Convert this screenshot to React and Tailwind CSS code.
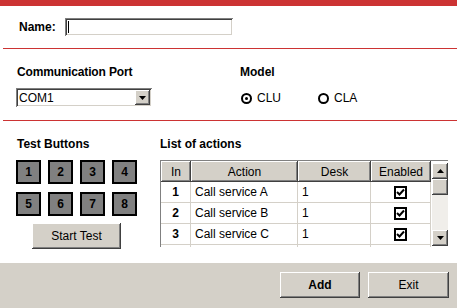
import React from "react";

const raised =
  "shadow-[inset_-1px_-1px_0_#404040,inset_1px_1px_0_#ffffff,inset_-2px_-2px_0_#808080,inset_2px_2px_0_#d4d0c8]";
const sunken =
  "shadow-[inset_1px_1px_0_#808080,inset_-1px_-1px_0_#ffffff,inset_2px_2px_0_#404040,inset_-2px_-2px_0_#d4d0c8]";

const Arrow = ({ up }) => (
  <svg width="7" height="4" viewBox="0 0 7 4">
    <path d={up ? "M3.5 0 L7 4 L0 4 Z" : "M0 0 L7 0 L3.5 4 Z"} fill="#000" />
  </svg>
);

const Radio = ({ checked, label }) => (
  <div className="flex items-center gap-[5px]">
    <div className="w-[11px] h-[11px] rounded-full border-2 border-black flex items-center justify-center">
      {checked && <div className="w-[3px] h-[3px] rounded-full bg-black" />}
    </div>
    <span className="text-[12px] text-black">{label}</span>
  </div>
);

const Check = () => (
  <div className="w-[13px] h-[13px] border-2 border-black bg-white flex items-center justify-center">
    <svg width="9" height="9" viewBox="0 0 9 9">
      <path d="M1 4 L3.5 6.5 L8 1.5" stroke="#000" strokeWidth="2" fill="none" />
    </svg>
  </div>
);

const rows = [
  { n: 1, action: "Call service A", desk: "1" },
  { n: 2, action: "Call service B", desk: "1" },
  { n: 3, action: "Call service C", desk: "1" },
];

const cell = "border-r border-b border-[#d4d0c8]";

export default function App() {
  return (
    <div className="w-[457px] h-[308px] bg-white overflow-hidden flex flex-col font-['Liberation_Sans',Arial,sans-serif] text-black">
      <div className="h-[6px] bg-[#cc3333]" />

      {/* Name */}
      <div className="flex items-center pt-[12px] pl-[19px] gap-[9px]">
        <span className="text-[12px] font-bold">Name:</span>
        <div className={`w-[168px] h-[18px] bg-white ${sunken} flex items-center pl-[3px]`}>
          <div className="w-px h-[12px] bg-black" />
        </div>
      </div>
      <div className="mt-[12px] ml-[3px] h-px bg-[#cc3333]" />

      {/* Port & model */}
      <div className="flex h-[71px] pt-[16px]">
        <div className="w-[240px] pl-[17px] flex flex-col">
          <span className="text-[12px] font-bold leading-[14px] tracking-[-0.15px]">Communication Port</span>
          <div className={`mt-[9px] ml-[-1px] w-[136px] h-[19px] bg-white ${sunken} flex items-center justify-between pl-[3px] pr-[2px]`}>
            <span className="text-[12px]">COM1</span>
            <div className={`w-[15px] h-[15px] bg-[#d4d0c8] ${raised} flex items-center justify-center`}>
              <Arrow />
            </div>
          </div>
        </div>
        <div className="flex flex-col">
          <span className="text-[12px] font-bold leading-[14px]">Model</span>
          <div className="mt-[10px] flex gap-[37px] pl-px">
            <Radio checked label="CLU" />
            <Radio label="CLA" />
          </div>
        </div>
      </div>
      <div className="ml-[3px] h-px bg-[#cc3333]" />

      {/* Test buttons & list */}
      <div className="flex h-[142px] pt-[16px]">
        <div className="w-[160px] pl-[17px] flex flex-col">
          <span className="text-[12px] font-bold leading-[14px]">Test Buttons</span>
          <div className="mt-[9px] ml-[-1px] grid grid-cols-[25px_25px_25px_25px] gap-x-[7px] gap-y-[8px]">
            {[1, 2, 3, 4, 5, 6, 7, 8].map((n) => (
              <div
                key={n}
                className="h-[24px] bg-[#808080] border-2 border-black flex items-center justify-center text-[12px] font-bold"
              >
                {n}
              </div>
            ))}
          </div>
          <div className={`mt-[7px] ml-[15px] w-[89px] h-[26px] bg-[#d4d0c8] ${raised} flex items-center justify-center text-[12px]`}>
            Start Test
          </div>
        </div>
        <div className="flex flex-col">
          <span className="text-[12px] font-bold leading-[14px]">List of actions</span>
          <div className="mt-[9px] w-[288px] h-[87px] flex overflow-hidden border-l border-t border-[#808080]">
            <div className="w-[270px] flex flex-col">
              <div className="grid grid-cols-[30px_107px_73px_60px] h-[21px] shrink-0">
                {["In", "Action", "Desk", "Enabled"].map((h) => (
                  <div
                    key={h}
                    className={`bg-[#d4d0c8] ${raised} flex items-center justify-center text-[12px]`}
                  >
                    {h}
                  </div>
                ))}
              </div>
              {rows.map((r) => (
                <div key={r.n} className="grid grid-cols-[30px_107px_73px_60px] h-[21px] shrink-0">
                  <div className={`${cell} flex items-center justify-center text-[12px] font-bold`}>{r.n}</div>
                  <div className={`${cell} flex items-center pl-[4px] text-[12px]`}>{r.action}</div>
                  <div className={`${cell} flex items-center pl-[4px] text-[12px]`}>{r.desk}</div>
                  <div className={`${cell} flex items-center justify-center`}>
                    <Check />
                  </div>
                </div>
              ))}
              <div className="grid grid-cols-[30px_107px_73px_60px] h-[21px] shrink-0">
                <div className={cell} />
                <div className={cell} />
                <div className={cell} />
                <div className={cell} />
              </div>
            </div>
            <div className="w-[17px] ml-px mt-[2px] h-[83px] bg-[#f0eeea] flex flex-col justify-between">
              <div className="flex flex-col">
                <div className={`h-[16px] bg-[#d4d0c8] ${raised} flex items-center justify-center`}>
                  <Arrow up />
                </div>
                <div className={`h-[16px] bg-[#d4d0c8] ${raised}`} />
              </div>
              <div className={`h-[16px] bg-[#d4d0c8] ${raised} flex items-center justify-center`}>
                <Arrow />
              </div>
            </div>
          </div>
        </div>
      </div>

      {/* Footer */}
      <div className="flex-1 bg-[#d4d0c8] flex justify-end items-start pt-[9px] pr-[8px] gap-[8px]">
        <div className={`w-[80px] h-[26px] bg-[#d4d0c8] ${raised} flex items-center justify-center text-[12px] font-bold`}>
          Add
        </div>
        <div className={`w-[81px] h-[26px] bg-[#d4d0c8] ${raised} flex items-center justify-center text-[12px]`}>
          Exit
        </div>
      </div>
    </div>
  );
}
